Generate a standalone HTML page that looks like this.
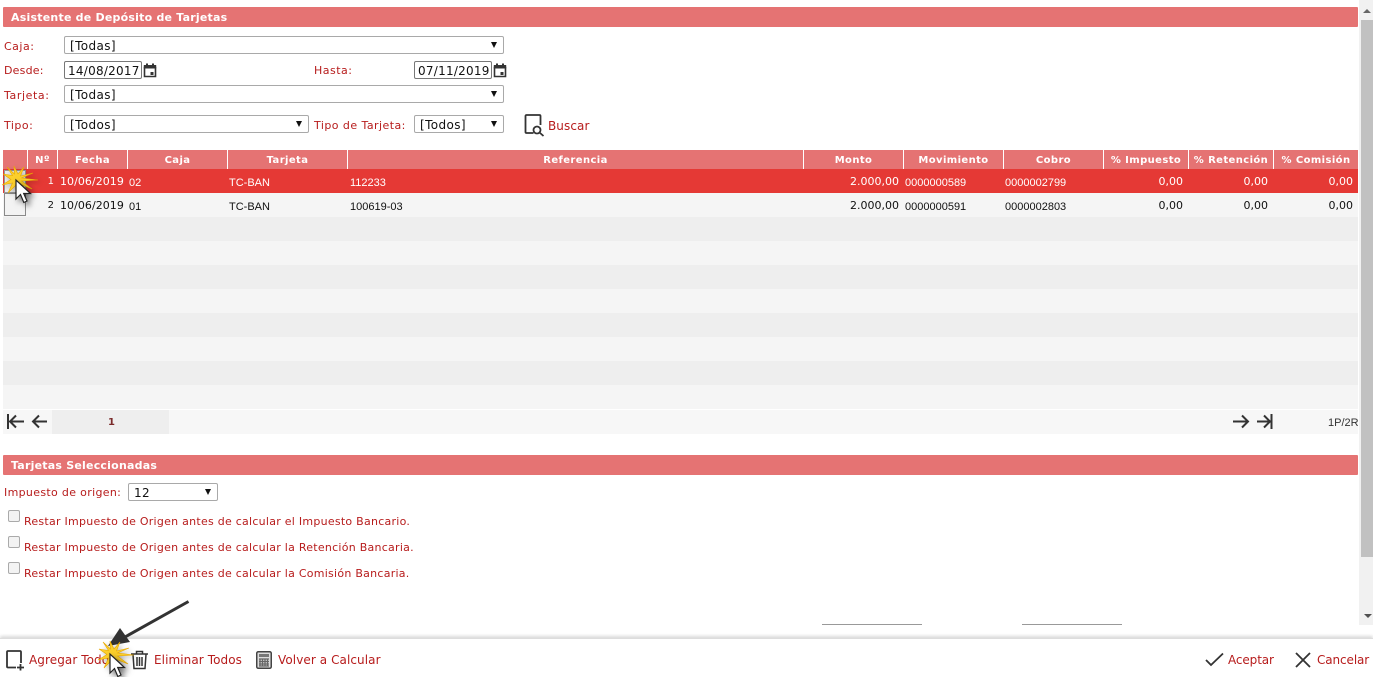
<!DOCTYPE html>
<html><head><meta charset="utf-8">
<style>
html,body{margin:0;padding:0;background:#fff;width:1373px;height:677px;overflow:hidden}
body{position:relative;font-family:"DejaVu Sans",Verdana,sans-serif;font-size:11px;color:#b71c1c}
.a{position:absolute;white-space:nowrap;margin-top:1px}
.bar{position:absolute;left:3px;width:1355px;height:20px;background:#e57373;color:#fff;font-weight:bold;font-size:11px;line-height:22px;text-indent:8px;border-radius:1px;letter-spacing:.22px}
.l{position:absolute;white-space:nowrap;line-height:14px;color:#b71c1c;margin-top:1px;letter-spacing:.26px}
.f{letter-spacing:.5px}
.b{font-size:12px;letter-spacing:.08px}
.sel{position:absolute;box-sizing:border-box;border:1px solid #a9a9a9;border-radius:2px;background:#fff;color:#111;font-size:12px;line-height:18px;padding-left:5px;height:18px;letter-spacing:.4px}
.sel:after{content:"";position:absolute;right:6px;top:5px;border-left:3.5px solid transparent;border-right:3.5px solid transparent;border-top:6px solid #111}
.date{position:absolute;box-sizing:border-box;border:1px solid #777;border-radius:2px;background:#fff;color:#111;font-size:12px;line-height:18px;padding-left:3px;height:18px;width:78px;letter-spacing:.25px}
.h{position:absolute;top:150px;height:19px;background:#e57373;color:#fff;font-weight:bold;font-size:10px;line-height:21px;text-align:center;letter-spacing:.4px}
.r{position:absolute;left:3px;width:1355px;height:24px}
.t{position:absolute;white-space:nowrap;color:#111;margin-top:1px}
.t.w{color:#fff}
.v{font-size:11px;line-height:14px}
.s{font-family:"Liberation Sans",Arial,sans-serif;font-size:11px;line-height:14px}
.n{text-align:right}
.cb{position:absolute;left:8px;width:12px;height:12px;box-sizing:border-box;border:1px solid #aaa;border-radius:2px;background:#f3f3f3}
svg{position:absolute;overflow:visible}
</style></head><body>

<div class="bar" style="top:7px">Asistente de Depósito de Tarjetas</div>

<div class="l f" style="left:4px;top:39px">Caja:</div>
<div class="sel" style="left:64px;top:36px;width:440px">[Todas]</div>
<div class="l f" style="left:4px;top:63px;letter-spacing:.2px">Desde:</div>
<div class="date" style="left:64px;top:61px">14/08/2017</div>
<svg style="left:143px;top:63px" width="14" height="15" viewBox="0 0 14 15"><path d="M1.500 4.500h11v9h-11z" fill="none" stroke="#333" stroke-width="1.600"/><path d="M.800 2h12.400v3.500H.800zM3 .500h2v2H3zM9 .500h2v2H9z" fill="#333"/><rect x="7.500" y="9" width="3" height="3" fill="#333"/></svg>
<div class="l f" style="left:314px;top:63px">Hasta:</div>
<div class="date" style="left:414px;top:61px">07/11/2019</div>
<svg style="left:493px;top:63px" width="14" height="15" viewBox="0 0 14 15"><path d="M1.500 4.500h11v9h-11z" fill="none" stroke="#333" stroke-width="1.600"/><path d="M.800 2h12.400v3.500H.800zM3 .500h2v2H3zM9 .500h2v2H9z" fill="#333"/><rect x="7.500" y="9" width="3" height="3" fill="#333"/></svg>
<div class="l f" style="left:4px;top:88px;letter-spacing:.6px">Tarjeta:</div>
<div class="sel" style="left:64px;top:85px;width:440px">[Todas]</div>
<div class="l f" style="left:4px;top:118px">Tipo:</div>
<div class="sel" style="left:64px;top:115px;width:245px">[Todos]</div>
<div class="l" style="left:314px;top:118px;letter-spacing:.45px">Tipo de Tarjeta:</div>
<div class="sel" style="left:414px;top:115px;width:90px">[Todos]</div>
<svg style="left:524px;top:114px" width="22" height="23" viewBox="0 0 22 23" fill="none" stroke="#333" stroke-width="1.800"><path d="M9.500 19H2.500a1 1 0 0 1-1-1V2a1 1 0 0 1 1-1h13a1 1 0 0 1 1 1v9"/><circle cx="13" cy="16" r="3.500"/><path d="M15.500 18.500l4 3.500"/></svg>
<div class="l b" style="left:548px;top:118px">Buscar</div>

<div class="h" style="left:3px;width:24px"></div>
<div class="h" style="left:28px;width:29px">Nº</div>
<div class="h" style="left:58px;width:69px">Fecha</div>
<div class="h" style="left:128px;width:99px">Caja</div>
<div class="h" style="left:228px;width:119px">Tarjeta</div>
<div class="h" style="left:348px;width:455px">Referencia</div>
<div class="h" style="left:804px;width:99px">Monto</div>
<div class="h" style="left:904px;width:99px">Movimiento</div>
<div class="h" style="left:1004px;width:99px">Cobro</div>
<div class="h" style="left:1104px;width:84px">% Impuesto</div>
<div class="h" style="left:1189px;width:84px">% Retención</div>
<div class="h" style="left:1274px;width:84px">% Comisión</div>

<div class="r" style="top:169px;background:#e53935"></div>
<div class="r" style="top:193px;background:#f5f5f5"></div>
<div class="r" style="top:217px;background:#eeeeee"></div>
<div class="r" style="top:241px;background:#f5f5f5"></div>
<div class="r" style="top:265px;background:#eeeeee"></div>
<div class="r" style="top:289px;background:#f5f5f5"></div>
<div class="r" style="top:313px;background:#eeeeee"></div>
<div class="r" style="top:337px;background:#f5f5f5"></div>
<div class="r" style="top:361px;background:#eeeeee"></div>
<div class="r" style="top:385px;background:#f5f5f5"></div>

<!-- row 1 -->
<div style="position:absolute;left:4px;top:170px;width:22px;height:23px;box-sizing:border-box;border:1px solid #999;background:#efefef"></div>
<div class="t w v n" style="left:28px;width:26px;top:174px;font-size:10px">1</div>
<div class="t w v" style="left:60px;top:174px;letter-spacing:.05px">10/06/2019</div>
<div class="t w s" style="left:129px;top:175px">02</div>
<div class="t w s" style="left:229px;top:175px">TC-BAN</div>
<div class="t w s" style="left:350px;top:175px">112233</div>
<div class="t w v n" style="left:804px;width:95px;top:174px">2.000,00</div>
<div class="t w s" style="left:905px;top:175px">0000000589</div>
<div class="t w s" style="left:1005px;top:175px">0000002799</div>
<div class="t w v n" style="left:1104px;width:79px;top:174px">0,00</div>
<div class="t w v n" style="left:1189px;width:79px;top:174px">0,00</div>
<div class="t w v n" style="left:1274px;width:79px;top:174px">0,00</div>

<!-- row 2 -->
<div style="position:absolute;left:4px;top:193px;width:22px;height:23px;box-sizing:border-box;border:1px solid #8a8a8a;background:#f3f3f3"></div>
<div class="t v n" style="left:28px;width:26px;top:198px;font-size:10px">2</div>
<div class="t v" style="left:60px;top:198px;letter-spacing:.05px">10/06/2019</div>
<div class="t s" style="left:129px;top:199px">01</div>
<div class="t s" style="left:229px;top:199px">TC-BAN</div>
<div class="t s" style="left:350px;top:199px">100619-03</div>
<div class="t v n" style="left:804px;width:95px;top:198px">2.000,00</div>
<div class="t s" style="left:905px;top:199px">0000000591</div>
<div class="t s" style="left:1005px;top:199px">0000002803</div>
<div class="t v n" style="left:1104px;width:79px;top:198px">0,00</div>
<div class="t v n" style="left:1189px;width:79px;top:198px">0,00</div>
<div class="t v n" style="left:1274px;width:79px;top:198px">0,00</div>

<!-- pager -->
<div style="position:absolute;left:3px;top:410px;width:1355px;height:24px;background:#f7f7f7"></div>
<div style="position:absolute;left:52px;top:410px;width:117px;height:24px;background:#eeeeee"></div>
<div class="a" style="left:108px;top:415px;font-size:10px;font-weight:bold;line-height:14px;color:#7a2a2a">1</div>
<svg style="left:6px;top:412px" width="42" height="20" viewBox="0 0 42 20" fill="none" stroke="#333" stroke-width="2"><path d="M2 2v15M18 9.500H4M10 3.500l-6 6 6 6M41 9.500H27M33 3.500l-6 6 6 6"/></svg>
<svg style="left:1232px;top:412px" width="44" height="20" viewBox="0 0 44 20" fill="none" stroke="#333" stroke-width="2"><path d="M1 9.500h15M10 3.500l6 6-6 6M25 9.500h13M32 3.500l6 6-6 6M39.500 2v15"/></svg>
<div class="a s" style="left:1328px;top:415px;color:#333">1P/2R</div>

<div class="bar" style="top:455px">Tarjetas Seleccionadas</div>
<div class="l" style="left:4px;top:485px;letter-spacing:.33px">Impuesto de origen:</div>
<div class="sel" style="left:128px;top:483px;width:90px">12</div>

<div class="cb" style="top:510px"></div>
<div class="l" style="left:24px;top:514px">Restar Impuesto de Origen antes de calcular el Impuesto Bancario.</div>
<div class="cb" style="top:536px"></div>
<div class="l" style="left:24px;top:540px">Restar Impuesto de Origen antes de calcular la Retención Bancaria.</div>
<div class="cb" style="top:562px"></div>
<div class="l" style="left:24px;top:566px">Restar Impuesto de Origen antes de calcular la Comisión Bancaria.</div>

<div style="position:absolute;left:822px;top:624px;width:100px;height:1px;background:#999"></div>
<div style="position:absolute;left:1022px;top:624px;width:100px;height:1px;background:#999"></div>

<!-- scrollbar -->
<div style="position:absolute;left:1359px;top:0;width:14px;height:625px;background:#f1f1f1"></div>
<div style="position:absolute;left:1361px;top:20px;width:12px;height:537px;background:#c1c1c1"></div>
<div style="position:absolute;left:1363px;top:9px;border-left:4px solid transparent;border-right:4px solid transparent;border-bottom:4px solid #666"></div>
<div style="position:absolute;left:1364px;top:614px;border-left:4px solid transparent;border-right:4px solid transparent;border-top:4px solid #505050"></div>

<!-- bottom bar -->
<div style="position:absolute;left:0;top:638px;width:1373px;height:39px;background:#fff;border-top:1px solid #ddd;box-sizing:border-box;box-shadow:0 -2px 3px rgba(0,0,0,.15)"></div>
<svg style="left:5px;top:650px" width="21" height="21" viewBox="0 0 21 21" fill="none" stroke="#333" stroke-width="1.800"><path d="M11 17.500H3a1 1 0 0 1-1-1V2a1 1 0 0 1 1-1h12a1 1 0 0 1 1 1v11"/><path d="M15.500 14v6.500M12 17.500h7"/></svg>
<div class="l b" style="left:29px;top:652px">Agregar Todos</div>
<svg style="left:130px;top:650px" width="19" height="20" viewBox="0 0 19 20" fill="none" stroke="#333" stroke-width="1.500"><path d="M1 4h17M6.500 3.500V1.500h6v2M3 4.500l1 14h11l1-14M7 7v9M9.500 7v9M12 7v9"/></svg>
<div class="l b" style="left:154px;top:652px">Eliminar Todos</div>
<svg style="left:256px;top:651px" width="16" height="18" viewBox="0 0 16 18"><rect x=".75" y=".75" width="14.500" height="16.500" rx="1.500" fill="#ddd" stroke="#444" stroke-width="1.500"/><rect x="3" y="3" width="10" height="3" fill="#777"/><path d="M3 8h10M3 10.500h10M3 13h10M3 15h10M4 7.500v8M6.500 7.500v8M9 7.500v8M11.500 7.500v8" stroke="#666" stroke-width="1.300"/></svg>
<div class="l b" style="left:278px;top:652px">Volver a Calcular</div>
<svg style="left:1205px;top:652px" width="19" height="15" viewBox="0 0 19 15" fill="none" stroke="#333" stroke-width="1.800"><path d="M1 8l5 5L18 1.500"/></svg>
<div class="l" style="left:1228px;top:652px;font-size:12px;letter-spacing:-.1px">Aceptar</div>
<svg style="left:1295px;top:652px" width="16" height="16" viewBox="0 0 16 16" fill="none" stroke="#333" stroke-width="1.800"><path d="M1 1l14 14M15 1L1 15"/></svg>
<div class="l" style="left:1317px;top:652px;font-size:12px;letter-spacing:-.1px">Cancelar</div>

<!-- arrow annotation -->
<svg style="left:105px;top:598px" width="90" height="50" viewBox="0 0 90 50"><path d="M83.500 3.500L20 39" stroke="#333" stroke-width="3" fill="none"/><polygon points="3,48 15,30 25,44" fill="#333"/></svg>

<!-- click burst 1 + cursor -->
<svg style="left:1px;top:165px;filter:drop-shadow(2px 2px 2px rgba(0,0,0,.3))" width="40" height="32" viewBox="0 0 40 32"><polygon points="13,1 17,9 23,2 19.500,11 32,8 20.500,13 37,15 20.500,16 31,24 18.500,19 19,29 15,20 7,28 11.500,18 1,20 10,14.500 2,9 11.500,10.500 6,2 13.500,9" fill="#fbcf2c" stroke="#e8a800" stroke-width=".6"/></svg>
<svg style="left:15px;top:179px;filter:drop-shadow(3px 3px 3px rgba(0,0,0,.55))" width="20" height="28" viewBox="0 0 20 28"><path d="M1 1v19l4.500-4.500 3.300 8 3.200-1.500-3.300-7.500h6.800z" fill="#fff" stroke="#222" stroke-width="1.200"/></svg>

<!-- click burst 2 + cursor -->
<svg style="left:97px;top:640px;filter:drop-shadow(2px 2px 2px rgba(0,0,0,.3))" width="40" height="32" viewBox="0 0 40 32"><polygon points="13,1 17,9 23,2 19.500,11 32,8 20.500,13 37,15 20.500,16 31,24 18.500,19 19,29 15,20 7,28 11.500,18 1,20 10,14.500 2,9 11.500,10.500 6,2 13.500,9" fill="#fbcf2c" stroke="#e8a800" stroke-width=".6"/></svg>
<svg style="left:109px;top:653px;filter:drop-shadow(3px 3px 3px rgba(0,0,0,.55))" width="20" height="28" viewBox="0 0 20 28"><path d="M1 1v19l4.500-4.500 3.300 8 3.200-1.500-3.300-7.500h6.800z" fill="#fff" stroke="#222" stroke-width="1.200"/></svg>

</body></html>
